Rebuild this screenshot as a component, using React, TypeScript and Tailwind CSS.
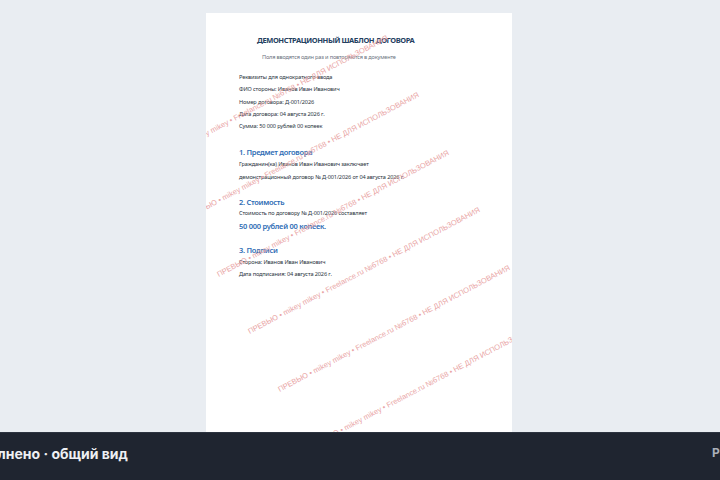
import React from 'react';

const watermarkText = 'ПРЕВЬЮ • mikey mikey • Freelance.ru №6768 • НЕ ДЛЯ ИСПОЛЬЗОВАНИЯ';

// left/top of each diagonal line inside the sheet
const watermarks = [
  { left: -52, top: 142 },
  { left: -21, top: 199 },
  { left: 9, top: 257 },
  { left: 40, top: 314 },
  { left: 70, top: 372 },
  { left: 101, top: 429 },
];

const Line = ({ children }: { children: React.ReactNode }) => (
  <p className="text-[5.6px] leading-[12.25px] tracking-[-0.13px] whitespace-nowrap text-[#2a3340]">{children}</p>
);

const Heading = ({ children }: { children: React.ReactNode }) => (
  <h2 className="text-[7.5px] leading-[12px] font-semibold tracking-[-0.29px] text-[#2f6db5]">{children}</h2>
);

const App = () => {
  return (
    <div className="relative flex h-[480px] w-[720px] flex-col overflow-hidden bg-[#e9edf2] font-['Noto_Sans',sans-serif]">
      <div className="flex min-h-0 flex-1 justify-center pt-[13px] pr-[2px]">
        <div className="relative h-[480px] w-[306px] shrink-0 overflow-hidden bg-white pl-[33px] pt-[21px]">
          <h1 className="pl-[18px] text-[7.5px] leading-[12px] font-bold tracking-[-0.4px] whitespace-nowrap text-[#24405f]">
            ДЕМОНСТРАЦИОННЫЙ ШАБЛОН ДОГОВОРА
          </h1>
          <p className="mt-[6px] pl-[23px] text-[5.6px] leading-[10px] tracking-[-0.18px] whitespace-nowrap text-[#6b7280]">
            Поля вводятся один раз и повторяются в документе
          </p>
          <div className="mt-[9px]">
            <Line>Реквизиты для однократного ввода</Line>
            <Line>ФИО стороны: Иванов Иван Иванович</Line>
            <Line>Номер договора: Д-001/2026</Line>
            <Line>Дата договора: 04 августа 2026 г.</Line>
            <Line>Сумма: 50 000 рублей 00 копеек</Line>
          </div>
          <div className="mt-[14px]">
            <Heading>1. Предмет договора</Heading>
            <Line>Гражданин(ка) Иванов Иван Иванович заключает</Line>
            <Line>демонстрационный договор № Д-001/2026 от 04 августа 2026 г.</Line>
          </div>
          <div className="mt-[13px]">
            <Heading>2. Стоимость</Heading>
            <div className="mt-[-0.5px]">
              <Line>Стоимость по договору № Д-001/2026 составляет</Line>
            </div>
            <p className="text-[7.5px] leading-[13px] font-semibold tracking-[-0.27px] whitespace-nowrap text-[#2f6db5]">50 000 рублей 00 копеек.</p>
          </div>
          <div className="mt-[11.5px]">
            <Heading>3. Подписи</Heading>
            <Line>Сторона: Иванов Иван Иванович</Line>
            <Line>Дата подписания: 04 августа 2026 г.</Line>
          </div>

          {watermarks.map((w) => (
            <span
              key={w.top}
              className="absolute origin-top-left -rotate-[28deg] font-['Liberation_Sans',sans-serif] text-[7.5px] leading-[12px] whitespace-nowrap text-[#e9a5a5]"
              style={{ left: w.left, top: w.top }}
            >
              {watermarkText}
            </span>
          ))}
        </div>
      </div>
      <div className="relative flex h-[48px] shrink-0 items-center justify-between border-t border-[#2d3440] bg-[#1f2530] pb-[7px] font-['Inter',sans-serif]">
        <span className="ml-[-37px] text-[14px] font-bold whitespace-nowrap text-[#eef0f3]">Заполнено · общий вид</span>
        <span className="mr-[-47px] text-[12px] font-bold whitespace-nowrap text-[#aab0b8]">PREVIEW</span>
      </div>
    </div>
  );
};

export default App;
